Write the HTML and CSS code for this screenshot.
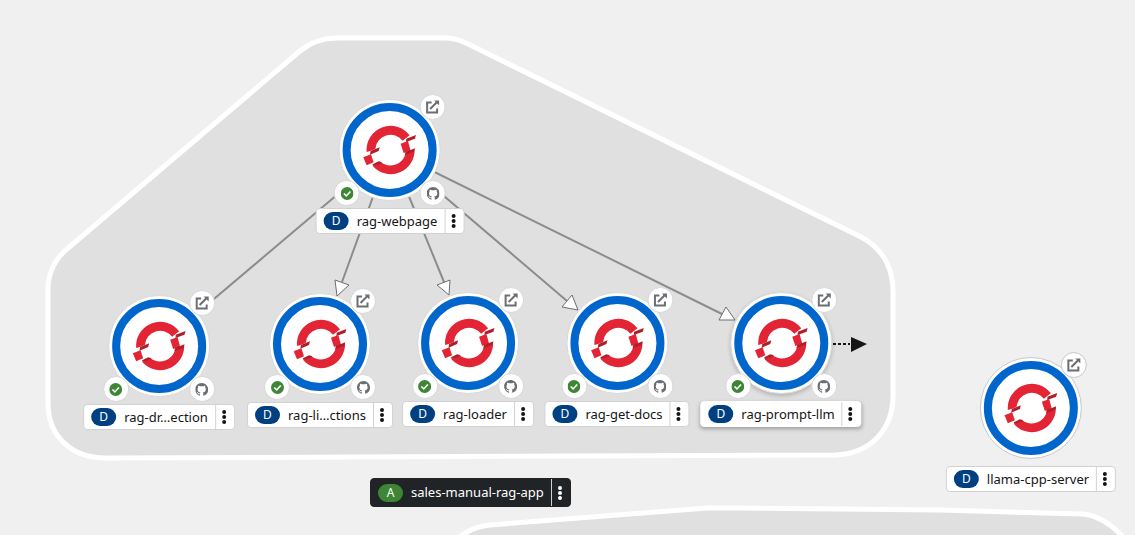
FILE: index.html
```html
<!DOCTYPE html>
<html lang="en">
<head>
<meta charset="utf-8">
<title>Topology</title>
<link rel="stylesheet" href="styles.css">
</head>
<body>
<svg class="symbols" aria-hidden="true">
  <symbol id="openshift" viewBox="0 0 210 210">
    <g class="logo-red">
      <path d="M36 111A72 72 0 0 1 165 61L144 77A46 46 0 0 0 62 102L47 108Z"/>
      <path d="M180 102A72 72 0 0 1 55 154L60 149L78 140A46 46 0 0 0 153 113Z"/>
      <path d="M26 127L49 118L57 142L36 151Z"/>
      <path d="M138 86L160 78L168 107L147 114Z"/>
    </g>
    <g class="logo-dark">
      <path d="M48 108L75 97L72 108L46 119Z"/>
      <path d="M155 71L184 60L181 71L154 81Z"/>
      <path d="M54 148L72 139L82 142L76 146L55 153Z"/>
      <path d="M153 111L181 100L178 110L151 120Z"/>
    </g>
  </symbol>
  <symbol id="external" viewBox="0 0 14 14">
    <path class="icon-line" d="M6 2.5H1.5V12.5H11.5V8.5M4.5 9L11.5 2"/>
    <path class="icon-fill" d="M8.5 .5H13.5V5.500Z"/>
  </symbol>
  <symbol id="github" viewBox="0 0 16 16">
    <path class="icon-fill" d="M8 0C3.58 0 0 3.58 0 8c0 3.54 2.29 6.53 5.47 7.59.4.07.55-.17.55-.38 0-.19-.01-.82-.01-1.49-2.01.37-2.53-.49-2.69-.94-.09-.23-.48-.94-.82-1.13-.28-.15-.68-.52-.01-.53.63-.01 1.08.58 1.23.82.72 1.21 1.87.87 2.33.66.07-.52.28-.87.51-1.07-1.78-.2-3.64-.89-3.64-3.95 0-.87.31-1.59.82-2.15-.08-.2-.36-1.02.08-2.12 0 0 .67-.21 2.2.82.64-.18 1.32-.27 2-.27s1.36.09 2 .27c1.53-1.04 2.2-.82 2.2-.82.44 1.1.16 1.92.08 2.12.51.56.82 1.27.82 2.15 0 3.07-1.87 3.75-3.65 3.95.29.25.54.73.54 1.48 0 1.07-.01 1.93-.01 2.2 0 .21.15.46.55.38A8.01 8.01 0 0 0 16 8c0-4.42-3.58-8-8-8Z"/>
  </symbol>
  <symbol id="check" viewBox="0 0 16 16">
    <circle class="check-disc" cx="8" cy="8" r="8"/>
    <path class="check-mark" d="M4 8L7 11L12 5.500"/>
  </symbol>
  <symbol id="kebab" viewBox="0 0 6 16">
    <circle cx="3" cy="3" r="2"/><circle cx="3" cy="8" r="2"/><circle cx="3" cy="13" r="2"/>
  </symbol>
</svg>

<main class="canvas">
  <svg class="graph" width="1135" height="535" viewBox="0 0 1135 535" aria-hidden="true">
    <path class="hull" d="M300 51Q316 38 337 38H445Q456 38 466 43L861 237Q893 254 893 292V395C893 430 870 454 835 455L105 458C74 458 48 438 48 403V290Q48 265 67 249Z"/>
    <path class="hull" d="M456 540Q470 527 490 525L707 508H740L940 510L1083 514Q1104 516 1124 538V580H456Z"/>
    <g class="edge">
      <path d="M390 150L208 304M390 150L342 282M390 150L444 282M390 150L567 301M390 150L722 314"/>
    </g>
    <g class="edge-head">
      <path d="M198 313L213 309L204 299Z"/>
      <path d="M337 296L335 280L349 285Z"/>
      <path d="M449 295L437 285L450 280Z"/>
      <path d="M578 310L562 307L572 295Z"/>
      <path d="M735 320L719 320L726 307Z"/>
    </g>
    <path class="traffic-line" d="M833 344H850"/>
    <path class="traffic-head" d="M851 337L867 344L851 352Z"/>
  </svg>

  <section class="node node-webpage">
    <div class="disc">
      <button class="ring" aria-label="rag-webpage"><svg class="logo"><use href="#openshift"/></svg></button>
      <a class="decorator open" href="#" aria-label="Open URL"><svg class="icon-open"><use href="#external"/></svg></a>
      <button class="decorator build" aria-label="Build complete"><svg><use href="#check"/></svg></button>
      <a class="decorator source" href="#" aria-label="Source code"><svg><use href="#github"/></svg></a>
    </div>
    <div class="label"><span class="badge">D</span><span class="name">rag-webpage</span><button class="menu" aria-label="Actions"><svg><use href="#kebab"/></svg></button></div>
  </section>

  <section class="node node-direction">
    <div class="disc">
      <button class="ring" aria-label="rag-dr…ection"><svg class="logo"><use href="#openshift"/></svg></button>
      <a class="decorator open" href="#" aria-label="Open URL"><svg class="icon-open"><use href="#external"/></svg></a>
      <button class="decorator build" aria-label="Build complete"><svg><use href="#check"/></svg></button>
      <a class="decorator source" href="#" aria-label="Source code"><svg><use href="#github"/></svg></a>
    </div>
    <div class="label"><span class="badge">D</span><span class="name">rag-dr…ection</span><button class="menu" aria-label="Actions"><svg><use href="#kebab"/></svg></button></div>
  </section>

  <section class="node node-list">
    <div class="disc">
      <button class="ring" aria-label="rag-li…ctions"><svg class="logo"><use href="#openshift"/></svg></button>
      <a class="decorator open" href="#" aria-label="Open URL"><svg class="icon-open"><use href="#external"/></svg></a>
      <button class="decorator build" aria-label="Build complete"><svg><use href="#check"/></svg></button>
      <a class="decorator source" href="#" aria-label="Source code"><svg><use href="#github"/></svg></a>
    </div>
    <div class="label"><span class="badge">D</span><span class="name">rag-li…ctions</span><button class="menu" aria-label="Actions"><svg><use href="#kebab"/></svg></button></div>
  </section>

  <section class="node node-loader">
    <div class="disc">
      <button class="ring" aria-label="rag-loader"><svg class="logo"><use href="#openshift"/></svg></button>
      <a class="decorator open" href="#" aria-label="Open URL"><svg class="icon-open"><use href="#external"/></svg></a>
      <button class="decorator build" aria-label="Build complete"><svg><use href="#check"/></svg></button>
      <a class="decorator source" href="#" aria-label="Source code"><svg><use href="#github"/></svg></a>
    </div>
    <div class="label"><span class="badge">D</span><span class="name">rag-loader</span><button class="menu" aria-label="Actions"><svg><use href="#kebab"/></svg></button></div>
  </section>

  <section class="node node-docs">
    <div class="disc">
      <button class="ring" aria-label="rag-get-docs"><svg class="logo"><use href="#openshift"/></svg></button>
      <a class="decorator open" href="#" aria-label="Open URL"><svg class="icon-open"><use href="#external"/></svg></a>
      <button class="decorator build" aria-label="Build complete"><svg><use href="#check"/></svg></button>
      <a class="decorator source" href="#" aria-label="Source code"><svg><use href="#github"/></svg></a>
    </div>
    <div class="label"><span class="badge">D</span><span class="name">rag-get-docs</span><button class="menu" aria-label="Actions"><svg><use href="#kebab"/></svg></button></div>
  </section>

  <section class="node node-prompt is-raised">
    <div class="disc">
      <button class="ring" aria-label="rag-prompt-llm"><svg class="logo"><use href="#openshift"/></svg></button>
      <a class="decorator open" href="#" aria-label="Open URL"><svg class="icon-open"><use href="#external"/></svg></a>
      <button class="decorator build" aria-label="Build complete"><svg><use href="#check"/></svg></button>
      <a class="decorator source" href="#" aria-label="Source code"><svg><use href="#github"/></svg></a>
    </div>
    <div class="label"><span class="badge">D</span><span class="name">rag-prompt-llm</span><button class="menu" aria-label="Actions"><svg><use href="#kebab"/></svg></button></div>
  </section>

  <section class="node node-llama is-outlined">
    <div class="disc">
      <button class="ring" aria-label="llama-cpp-server"><svg class="logo"><use href="#openshift"/></svg></button>
      <a class="decorator open" href="#" aria-label="Open URL"><svg class="icon-open"><use href="#external"/></svg></a>
    </div>
    <div class="label"><span class="badge">D</span><span class="name">llama-cpp-server</span><button class="menu" aria-label="Actions"><svg><use href="#kebab"/></svg></button></div>
  </section>

  <div class="label group-label"><span class="badge">A</span><span class="name">sales-manual-rag-app</span><button class="menu" aria-label="Application actions"><svg><use href="#kebab"/></svg></button></div>
</main>
</body>
</html>
```
FILE: styles.css
```css
* { box-sizing: border-box; }

body {
  margin: 0;
  background: #f0f0f0;
  color: #151515;
  font: 13px/18px "Noto Sans", "Open Sans", sans-serif;
}

button {
  margin: 0;
  padding: 0;
  border: 0;
  background: none;
  color: inherit;
  font: inherit;
  cursor: pointer;
}

.symbols {
  position: absolute;
  width: 0;
  height: 0;
}

.canvas {
  position: relative;
  min-height: 100vh;
  overflow: hidden;
}

/* Groups and connectors */
.graph {
  position: absolute;
  left: 0;
  top: 0;
  overflow: visible;
}
.hull { fill: #e0e0e0; stroke: #fff; stroke-width: 5; }
.edge { fill: none; stroke: #8a8d90; stroke-width: 2; }
.edge-head { fill: #fff; stroke: #6a6e73; stroke-width: 1; }
.traffic-line { stroke: #151515; stroke-width: 2; stroke-dasharray: 3 2; }
.traffic-head { fill: #151515; }

/* Nodes */
.node {
  position: absolute;
  display: flex;
  flex-direction: column;
  align-items: center;
  gap: 7px;
  transform: translateX(-50%);
}
.node-webpage { left: 390px; top: 99px; }
.node-direction { left: 159px; top: 295px; }
.node-list { left: 320px; top: 293px; }
.node-loader { left: 468px; top: 292px; }
.node-docs { left: 617px; top: 292px; }
.node-prompt { left: 781px; top: 292px; }
.node-llama { left: 1031px; top: 357px; }

.disc {
  position: relative;
  width: 102px;
  height: 102px;
  padding: 3px;
  border: 1px solid #d8d8d8;
  border-radius: 50%;
  background: #fff;
}
.ring {
  display: grid;
  place-items: center;
  width: 94px;
  height: 94px;
  border: 8px solid #06c;
  border-radius: 50%;
  background: #fff;
}
.logo { width: 70px; height: 70px; }
.logo-red path { fill: #e22434; }
.logo-dark path { fill: #ad1f29; }

.decorator {
  position: absolute;
  display: grid;
  place-items: center;
  width: 26px;
  height: 26px;
  border: 1px solid #d8d8d8;
  border-radius: 50%;
  background: #fff;
}
.decorator svg { width: 13px; height: 13px; }
.decorator .icon-open { width: 14px; height: 14px; }
.open { right: -6px; top: -6px; }
.build { left: -6px; bottom: -6px; }
.source { right: -6px; bottom: -6px; }

.icon-line { fill: none; stroke: #6a6e73; stroke-width: 2; }
.icon-fill { fill: #6a6e73; }
.check-disc { fill: #3e8635; }
.check-mark { fill: none; stroke: #fff; stroke-width: 2; }

/* Labels */
.label {
  display: flex;
  align-items: center;
  height: 26px;
  padding-left: 7px;
  border: 1px solid #d2d2d2;
  border-radius: 4px;
  background: #fff;
  white-space: nowrap;
}
.badge {
  width: 25px;
  height: 18px;
  margin-right: 8px;
  border-radius: 9px;
  background: #004080;
  color: #fff;
  font-size: 12px;
  text-align: center;
}
.name {
  margin-right: 7px;
  padding-bottom: 1px;
}
.menu {
  display: grid;
  place-items: center;
  align-self: stretch;
  width: 19px;
  padding-right: 2px;
  border-left: 1px solid #d2d2d2;
}
.menu svg { width: 6px; height: 16px; fill: currentColor; }

.is-raised .disc { box-shadow: 0 2px 4px rgba(0, 0, 0, .2); }
.is-raised .label { border-color: #fff; box-shadow: 0 2px 4px rgba(0, 0, 0, .3); }
.is-outlined .disc, .is-outlined .decorator { border-color: #c8c8c8; }

.group-label {
  position: absolute;
  left: 370px;
  top: 478px;
  height: 29px;
  border-color: #212427;
  background: #212427;
  color: #fff;
}
.group-label .badge { background: #3e8635; }
```
